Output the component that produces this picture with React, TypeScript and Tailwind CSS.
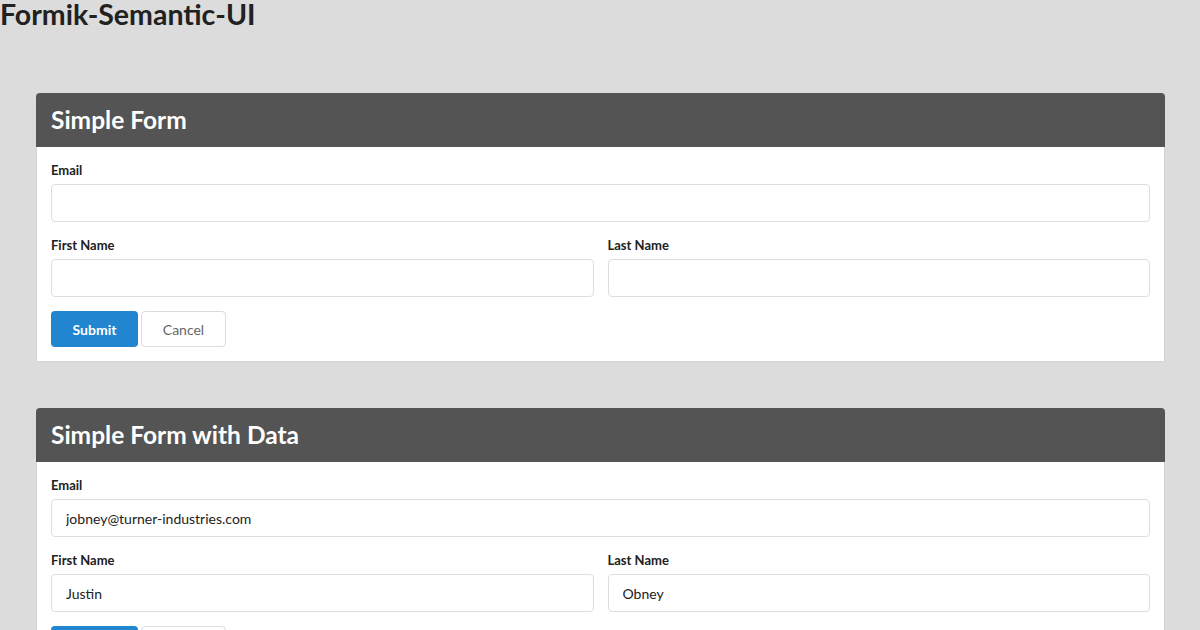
const font = { fontFamily: "Lato, 'Open Sans', sans-serif" };

type FormProps = {
    title: string;
    email?: string;
    firstName?: string;
    lastName?: string;
};

function Field({ label, value }: { label: string; value?: string }) {
    return (
        <div>
            <label className="block text-[13px] font-bold leading-[19px] text-[#212121] mb-[4px]">{label}</label>
            <input
                readOnly
                value={value ?? ""}
                className="block w-full h-[38px] px-[14px] rounded-[4px] border border-[#dedede] bg-white text-[14px] text-[#212121] outline-none"
                style={font}
            />
        </div>
    );
}

function FormSegment({ title, email, firstName, lastName }: FormProps) {
    return (
        <section>
            <div className="h-[54px] flex items-center px-[15px] rounded-t-[4px] bg-[#545454]">
                <h2 className="text-[24.5px] font-bold leading-[32px] text-white">{title}</h2>
            </div>
            <div className="bg-white border border-t-0 border-[#d4d4d5] px-[14px] pt-[14px] pb-[14px]">
                <div className="mb-[14px]">
                    <Field label="Email" value={email} />
                </div>
                <div className="grid grid-cols-2 gap-[14px] mb-[14px]">
                    <Field label="First Name" value={firstName} />
                    <Field label="Last Name" value={lastName} />
                </div>
                <div className="flex gap-[3px]">
                    <button className="h-[36px] w-[87px] rounded-[4px] bg-[#2185d0] text-white text-[14px] font-bold" style={font}>
                        Submit
                    </button>
                    <button className="h-[36px] w-[85px] rounded-[4px] bg-white border border-[#dcdcdc] text-[#666666] text-[14px]" style={font}>
                        Cancel
                    </button>
                </div>
            </div>
        </section>
    );
}

export default function App() {
    return (
        <div className="min-h-screen bg-[#dcdcdc]" style={font}>
            <h1 className="text-[28.5px] font-bold leading-[28px] text-[#212121]">Formik-Semantic-UI</h1>
            <main className="pl-[36px] pr-[35px] pt-[65px] space-y-[46px]">
                <FormSegment title="Simple Form" />
                <FormSegment
                    title="Simple Form with Data"
                    email="jobney@turner-industries.com"
                    firstName="Justin"
                    lastName="Obney"
                />
            </main>
        </div>
    );
}
